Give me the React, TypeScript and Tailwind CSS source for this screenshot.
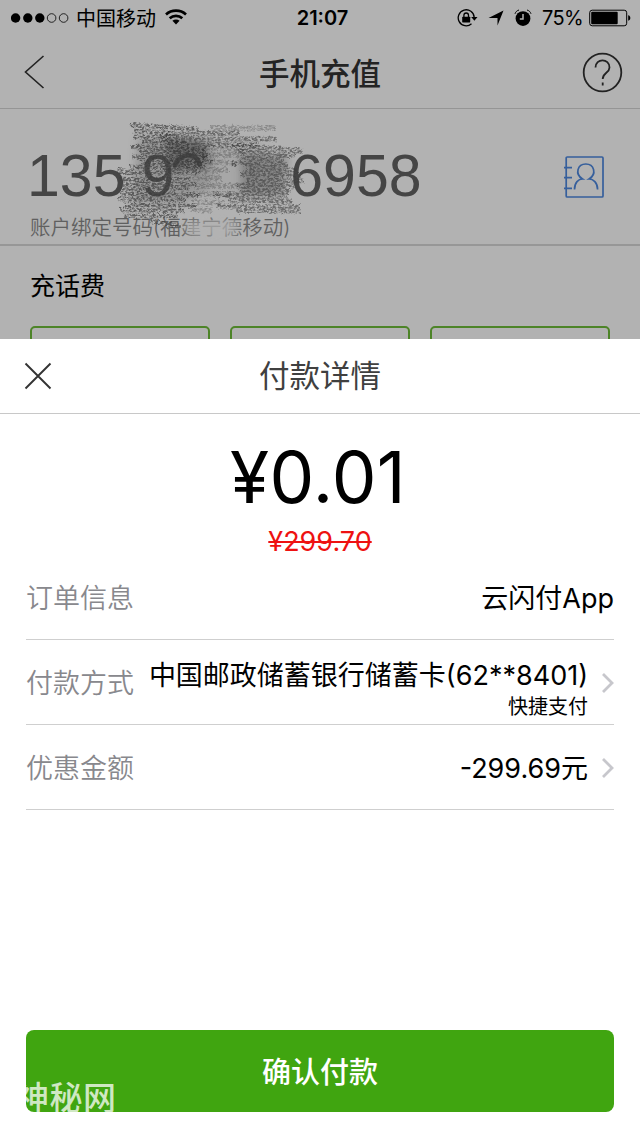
import type { ReactNode } from 'react';

interface RowProps {
  label: string;
  arrow?: boolean;
  children: ReactNode;
}

function StatusBar() {
  return (
    <div className="relative flex h-9 shrink-0 items-center pl-[11px] pr-[9px] text-[20px] leading-9 text-black">
      <svg width="58" height="10" viewBox="0 0 58 10">
        {[4.6, 16.8, 28.8].map((cx) => (
          <circle key={cx} cx={cx} cy="5" r="4.7" />
        ))}
        {[40.6, 52.6].map((cx) => (
          <circle key={cx} cx={cx} cy="5" r="4.3" fill="none" stroke="black" strokeWidth="0.8" />
        ))}
      </svg>
      <span className="ml-[7px] mt-[2px] whitespace-nowrap">中国移动</span>
      <svg className="ml-[9px] -mt-[2px]" width="22" height="16" viewBox="0 0 22 16" fill="none" stroke="black" strokeWidth="2.7">
        <path d="M1 5.4C6.6.4 15.4.4 21 5.4" />
        <path d="M4.7 9.3c3.6-3.2 9-3.2 12.6 0" />
        <path d="M7.4 11.7c2.1-1.7 5.1-1.7 7.2 0L11 15.6z" fill="black" stroke="none" />
      </svg>
      <span className="absolute inset-x-0 pl-[5px] text-center text-[20px] font-semibold">21:07</span>
      <div className="ml-auto flex items-center">
        <svg width="21" height="18" viewBox="0 0 21 18" fill="none" stroke="black" strokeWidth="1.3">
          <path d="M14.5 14.8A8 8 0 1 1 17.2 8.4" />
          <path d="M14.2 8h6.300l-3.100 3.800z" fill="black" stroke="none" />
          <rect x="5.2" y="7.7" width="8" height="5.7" rx="0.6" fill="black" stroke="none" />
          <path d="M6.9 8V6.300a2.300 2.300 0 0 1 4.600 0V8" />
        </svg>
        <svg className="ml-[10px]" width="16" height="16" viewBox="0 0 16 16">
          <path d="M0.5 8 15.5.5 9.5 15.5V8z" />
        </svg>
        <svg className="ml-[10px]" width="18" height="18" viewBox="0 0 18 18">
          <circle cx="9" cy="9.6" r="7.4" />
          <path d="M1 4.8C1.5 3 3 1.5 5 1M17 4.8C16.5 3 15 1.5 13 1" fill="none" stroke="black" strokeWidth="1" />
          <path d="M9 5v5H5.800" fill="none" stroke="#b2b2b2" strokeWidth="1.5" />
        </svg>
        <span className="ml-[10px] tracking-[-0.6px]">75%</span>
        <svg className="ml-[6px]" width="42" height="18" viewBox="0 0 42 18">
          <rect x="0.7" y="1.2" width="37" height="15.6" rx="2.5" fill="none" stroke="black" strokeWidth="1" />
          <rect x="2.2" y="2.7" width="26.5" height="12.6" rx="1" />
          <path d="M39.2 6.3c2.8.3 2.8 5.1 0 5.4z" />
        </svg>
      </div>
    </div>
  );
}

/* Charcoal smudge hiding the middle digits */
function Scribble() {
  return (
    <svg className="pointer-events-none absolute left-[110px] top-0" width="210" height="136" viewBox="110 109 210 136">
      <defs>
        <filter id="grain" x="-10%" y="-10%" width="120%" height="120%">
          <feTurbulence type="fractalNoise" baseFrequency="0.38 0.55" numOctaves="4" seed="8" result="noise" />
          <feColorMatrix in="noise" type="matrix" values="0 0 0 0 0  0 0 0 0 0  0 0 0 0 0  3.5 0 0 0 -1.2" result="mask" />
          <feDisplacementMap in="SourceGraphic" in2="noise" scale="5" xChannelSelector="G" yChannelSelector="B" result="rough" />
          <feComposite in="rough" in2="mask" operator="in" result="grains" />
          <feGaussianBlur in="grains" stdDeviation="0.6" />
        </filter>
        <filter id="soft" x="-20%" y="-20%" width="140%" height="140%">
          <feGaussianBlur stdDeviation="4" />
        </filter>
      </defs>
      <g filter="url(#soft)" fill="#555555">
        <path d="M138 138 205 138 214 160 208 190 180 206 132 204z" opacity="0.3" />
        <path d="M206 140 268 144 244 200 206 198z" opacity="0.12" />
        <path d="M166 136 206 142 207 166 168 172z" opacity="0.65" />
        <path d="M240 154 288 156 282 196 242 196z" opacity="0.45" />
      </g>
      <g filter="url(#grain)" fill="none" stroke="#3c3c3c">
        <path
          strokeWidth="4.5"
          opacity="0.7"
          d="M130 125 198 129M134 131 172 133M133 137 176 137M142 142 186 142M131 147 196 147M139 152 204 151M132 157 208 156M140 162 212 161M130 167 206 166M117 170 132 172M120 173 200 172M120 179 190 179M122 184 196 184M122 189 190 188M120 194 200 195M118 199 186 200M124 205 196 206M120 210 184 211M124 216 178 216M150 221 182 226"
        />
        <path
          strokeWidth="5"
          opacity="0.6"
          d="M160 134 240 133M162 139 277 139M166 144 258 145M164 150 206 150M168 155 210 156M162 161 206 162M164 168 200 167"
        />
        <path
          strokeWidth="5"
          opacity="0.6"
          d="M232 145 302 151M236 151 296 156M240 157 284 160M232 163 288 165M246 169 298 170M240 174 296 175M246 180 304 181M236 185 294 186M240 190 290 190M214 195 288 195M228 200 292 201M216 206 300 207M236 210 300 211"
        />
        <path
          strokeWidth="5.5"
          opacity="0.35"
          d="M198 148 250 149M202 155 246 155M208 162 240 163M194 170 228 170M192 178 222 178M194 186 240 186M190 194 236 194M192 202 224 203M190 209 212 210M210 128 276 128"
        />
      </g>
      <path d="M175 167c2-14 23-17 25-1" fill="none" stroke="#3c3c3c" strokeWidth="4.5" opacity="0.8" />
      <path d="M182 222 240 218 236 238 190 237z" fill="#b2b2b2" opacity="0.75" filter="url(#soft)" />
    </svg>
  );
}

function Row({ label, arrow, children }: RowProps) {
  return (
    <div className="flex h-[85px] items-center border-b border-[#cfcfcf] text-[27px]">
      <span className="pt-1 font-[350] text-[#88888d]">{label}</span>
      <div className="ml-auto flex flex-col items-end whitespace-nowrap pt-1 text-black">{children}</div>
      {arrow && (
        <svg className="ml-[14px] mt-px" width="12" height="20" viewBox="0 0 12 20" fill="none" stroke="#c7c7cc" strokeWidth="2.8">
          <path d="M1 1l9 9-9 9" />
        </svg>
      )}
    </div>
  );
}

export default function App() {
  return (
    <div className="relative flex h-[1138px] w-[640px] flex-col overflow-hidden bg-white font-['Inter','Noto_Sans_CJK_SC',sans-serif]">
      <div className="flex h-[339px] shrink-0 flex-col overflow-hidden bg-[#b2b2b2]">
        <StatusBar />

        {/* Page header */}
        <header className="flex h-[73px] shrink-0 items-center justify-between border-b border-[#959595] pl-6 pr-[17px]">
          <div className="w-[41px]">
            <svg width="21" height="34" viewBox="0 0 21 34" fill="none" stroke="#222222" strokeWidth="1.6">
              <path d="M19.5 1 1.5 17l18 16" />
            </svg>
          </div>
          <h1 className="-ml-[7px] pt-[3px] text-[30.5px] font-medium leading-[69px] text-[#242424]">手机充值</h1>
          <svg width="41" height="41" viewBox="0 0 41 41" fill="none" stroke="#222222" strokeWidth="1.8">
            <circle cx="20.5" cy="20.5" r="18.8" />
            <path d="M13.5 15.500c0-9.500 14-9.500 14 0 0 5.500-6.800 5-6.800 11.500M20.700 30.500v3" />
          </svg>
        </header>

        {/* Phone number */}
        <section className="relative flex h-[137px] shrink-0 items-start justify-between border-b-2 border-[#979797] pl-[27px] pr-[36px]">
          <div className="pt-[33px]">
            <div className="flex font-['Liberation_Sans',sans-serif] text-[59px] leading-[68px] text-[#454545]">
              <span>135</span>
              <span className="ml-4">9</span>
              <span className="ml-[116px]">6958</span>
            </div>
            <p className="mt-[3px] pl-[3px] text-[20.5px] font-[350] leading-[30px] text-[#606060]">账户绑定号码(福建宁德移动)</p>
          </div>
          <svg className="mt-[47px]" width="41" height="42" viewBox="0 0 41 42" fill="none" stroke="#365f9c" strokeWidth="1.7">
            <rect x="3.2" y="1" width="36.8" height="40" rx="1" />
            <path d="M1 11.6h8M1 21.7h8M1 32.3h8" />
            <path d="M11.5 33.5c0-7 4-10.500 8-10.500-8-5-5-15 3.300-15s11.300 10 3.300 15c4 0 8.500 3.500 8.500 10.500" />
          </svg>
          <Scribble />
        </section>

        <h2 className="pl-[30px] text-[25px] leading-[80px] text-black">充话费</h2>
        <div className="flex shrink-0 gap-5 px-[30px]">
          {[0, 1, 2].map((i) => (
            <div key={i} className="h-20 flex-1 rounded-[5px] border-2 border-[#4d8428]" />
          ))}
        </div>
      </div>

      {/* Payment sheet */}
      <div className="flex h-[75px] shrink-0 items-center justify-between border-b border-[#c8c8c8] px-6">
        <svg width="28" height="28" viewBox="0 0 28 28" stroke="#333333" strokeWidth="1.9">
          <path d="M1.5 1.500l25 25M26.500 1.500l-25 25" />
        </svg>
        <h2 className="text-[30.5px] font-normal text-[#404040]">付款详情</h2>
        <div className="w-7" />
      </div>
      <div className="pt-[22px] text-center">
        <div className="pr-1 text-[71px] leading-[82px] tracking-[0.3px] text-black">¥0.01</div>
        <div className="mt-2 text-[27px] leading-8 text-[#ee1111] line-through decoration-2">¥299.70</div>
      </div>
      <div className="-mt-[3px] px-[26px]">
        <Row label="订单信息">
          <span>云闪付App</span>
        </Row>
        <Row label="付款方式" arrow>
          <span className="pt-[13px] leading-[32px]">中国邮政储蓄银行储蓄卡(62**8401)</span>
          <span className="text-[20px] leading-[30px]">快捷支付</span>
        </Row>
        <Row label="优惠金额" arrow>
          <span>-299.69元</span>
        </Row>
      </div>
      <div className="relative mx-[26px] mb-[26px] mt-auto">
        <button className="block h-[82px] w-full rounded-lg bg-[#40a510] pt-1 text-[29px] font-medium text-white">确认付款</button>
        <span className="absolute -left-[10px] bottom-[-10px] text-[33px] font-medium leading-[48px] tracking-[0.5px] text-white/75">神秘网</span>
      </div>
    </div>
  );
}
